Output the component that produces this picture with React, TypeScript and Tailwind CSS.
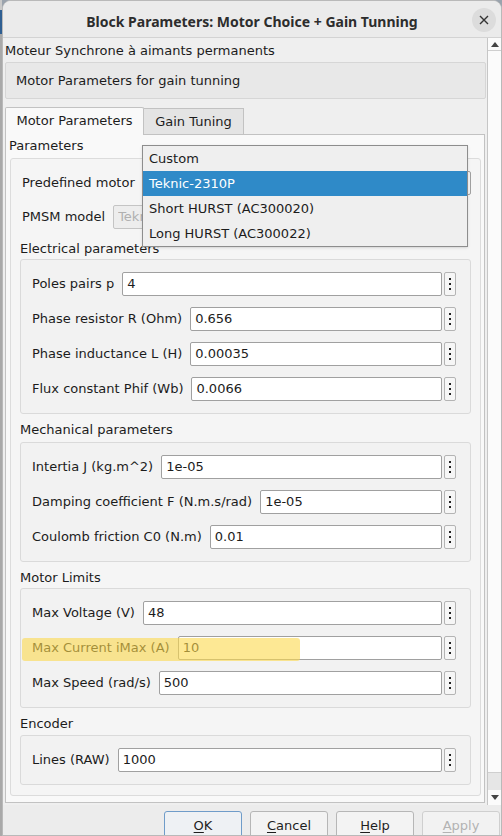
import React from "react";

const FONT = { fontFamily: '"DejaVu Sans", "Liberation Sans", sans-serif' };

function Dots() {
  return (
    <div className="ml-[2px] w-[12px] h-[24px] shrink-0 rounded-[2px] border border-[#b4b4b4] bg-[#f6f6f6] flex items-center justify-center">
      <svg width="4" height="14" viewBox="0 0 4 14">
        <rect x="1" y="1" width="2" height="2" fill="#222" />
        <rect x="1" y="6" width="2" height="2" fill="#222" />
        <rect x="1" y="11" width="2" height="2" fill="#222" />
      </svg>
    </div>
  );
}

function Row({ label, value, highlight }: { label: string; value: string; highlight?: boolean }) {
  return (
    <div className="relative flex items-center h-[24px]">
      <span className="whitespace-nowrap mr-[8px] leading-[16px]">{label}</span>
      <div className="flex-1 h-[24px] bg-white border border-[#a0a0a0] rounded-[2px] flex items-center pl-[4px] leading-[16px]">
        {value}
      </div>
      <Dots />
      {highlight && (
        <div className="absolute left-[-10px] top-[2px] w-[278px] h-[23px] rounded-[3px] bg-[#fcd84c]/60 pointer-events-none" />
      )}
    </div>
  );
}

function Section({ title, children, mt, mb }: { title: string; children: React.ReactNode; mt: string; mb: string }) {
  return (
    <div className={mt}>
      <div className={"leading-[16px] h-[16px] " + mb}>{title}</div>
      <div className="border border-[#dadada] bg-[#f2f2f2] rounded-[3px] pt-[12px] pb-[12px] pl-[11px] pr-[14px] flex flex-col gap-[11px]">
        {children}
      </div>
    </div>
  );
}

function Btn({ u, rest, focus, disabled }: { u: string; rest: string; focus?: boolean; disabled?: boolean }) {
  return (
    <div
      className={
        "w-[78px] h-[30px] rounded-[3px] flex items-center justify-center text-[13px] " +
        (focus
          ? "border border-[#6f9cc9] bg-[#eef1f4] text-[#1e1e1e]"
          : disabled
          ? "border border-[#cfcfcf] bg-[#f2f2f2] text-[#b3b3b3]"
          : "border border-[#b6b6b6] bg-[#f3f3f3] text-[#1e1e1e]")
      }
    >
      <span>
        <span className="underline underline-offset-[2px]">{u}</span>
        {rest}
      </span>
    </div>
  );
}

export default function App() {
  return (
    <div style={FONT} className="w-[502px] h-[836px] overflow-hidden bg-[#9aa3ad] flex text-[13px] text-[#1c1c1c]">
      <div className="w-[2px] shrink-0 flex flex-col">
        <div className="h-[10px] bg-[#c9c9c9]" />
        <div className="h-[24px] bg-[#2f5f92]" />
        <div className="flex-1 bg-[#a9a9a9]" />
      </div>
      <div className="flex-1 flex flex-col rounded-tl-[9px] rounded-tr-[9px] border border-[#b9b9b9] bg-[#efefef] overflow-hidden">
        {/* Title bar */}
        <div className="relative h-[37px] shrink-0 bg-[#ebebeb] border-b border-[#d3d3d3] flex items-center justify-center">
          <span
            style={{ fontFamily: '"Noto Sans", "DejaVu Sans", sans-serif' }}
            className="font-bold text-[14px] text-[#2d2d2d] mt-[4px]"
          >
            Block Parameters: Motor Choice + Gain Tunning
          </span>
          <div className="absolute right-[5px] top-[7px] w-[24px] h-[24px] rounded-full bg-[#dcdcdc] flex items-center justify-center">
            <svg width="10" height="10" viewBox="0 0 10 10">
              <path d="M1 1 L9 9 M9 1 L1 9" stroke="#333" strokeWidth="1.4" />
            </svg>
          </div>
        </div>

        {/* Scroll region */}
        <div className="flex h-[767px] shrink-0">
          <div className="flex-1 flex flex-col pl-[2px] pr-[1px]">
            <div className="pt-[5px] leading-[16px] h-[21px]">Moteur Synchrone à aimants permanents</div>
            <div className="mt-[3px] h-[37px] border border-[#d6d6d6] bg-[#e8e8e8] rounded-[2px] flex items-center pl-[10px] leading-[16px]">
              Motor Parameters for gain tunning
            </div>

            {/* Tabs */}
            <div className="mt-[7px] flex items-end h-[28px]">
              <div className="h-[28px] w-[139px] border border-b-0 border-[#c2c2c2] bg-[#f9f9f9] rounded-t-[2px] flex items-center justify-center relative z-10 mb-[-1px] pb-[1px]">
                Motor Parameters
              </div>
              <div className="h-[26px] w-[100px] border border-b-0 border-l-0 border-[#c2c2c2] bg-[#e4e4e4] flex items-center justify-center">
                Gain Tuning
              </div>
            </div>

            {/* Panel */}
            <div className="relative w-[480px] border border-[#c2c2c2] bg-[#f9f9f9] pl-[4px] pr-[3px] pt-[3px] pb-[6px]">
              <div className="leading-[16px] h-[16px] -ml-[1px]">Parameters</div>
              <div className="mt-[4px] border border-[#dcdcdc] bg-[#f5f5f5] rounded-[3px] px-[9px] pt-[12px] pb-[10px]">
                <div className="flex items-center h-[24px] pl-[2px]">
                  <span className="w-[120px] leading-[16px]">Predefined motor</span>
                  <div className="flex-1 h-[24px] border border-[#a0a0a0] bg-[#f4f4f4] rounded-[2px]" />
                </div>
                <div className="mt-[10px] flex items-center h-[24px] pl-[2px]">
                  <span className="mr-[8px] leading-[16px]">PMSM model</span>
                  <div className="flex-1 mr-[14px] h-[24px] border border-[#c4c4c4] bg-[#ededed] rounded-[2px] flex items-center pl-[4px] text-[#b0b0b0]">
                    <span className="w-[26px] overflow-hidden whitespace-nowrap">Tekn</span>
                  </div>
                </div>

                <Section title="Electrical parameters" mt="mt-[12px]" mb="mb-[2px]">
                  <Row label="Poles pairs p" value="4" />
                  <Row label="Phase resistor R (Ohm)" value="0.656" />
                  <Row label="Phase inductance L (H)" value="0.00035" />
                  <Row label="Flux constant Phif (Wb)" value="0.0066" />
                </Section>
                <Section title="Mechanical parameters" mt="mt-[8px]" mb="mb-[4px]">
                  <Row label="Intertia J (kg.m^2)" value="1e-05" />
                  <Row label="Damping coefficient F (N.m.s/rad)" value="1e-05" />
                  <Row label="Coulomb friction C0 (N.m)" value="0.01" />
                </Section>
                <Section title="Motor Limits" mt="mt-[8px]" mb="mb-[2px]">
                  <Row label="Max Voltage (V)" value="48" />
                  <Row label="Max Current iMax (A)" value="10" highlight />
                  <Row label="Max Speed (rad/s)" value="500" />
                </Section>
                <Section title="Encoder" mt="mt-[8px]" mb="mb-[3px]">
                  <Row label="Lines (RAW)" value="1000" />
                </Section>
              </div>

              {/* Dropdown popup */}
              <div className="absolute left-[136px] top-[10px] w-[326px] h-[102px] border border-[#8d8d8d] bg-[#efefef] flex flex-col shadow-sm">
                <div className="h-[25px] flex items-center pl-[6px]">Custom</div>
                <div className="h-[25px] flex items-center pl-[6px] bg-[#2f8ac8] text-white">Teknic-2310P</div>
                <div className="h-[25px] flex items-center pl-[6px]">Short HURST (AC300020)</div>
                <div className="h-[25px] flex items-center pl-[6px]">Long HURST (AC300022)</div>
              </div>
            </div>
          </div>

          {/* Scrollbar */}
          <div className="w-[14px] shrink-0 border-l border-[#c6c6c6] bg-[#fbfbfb] flex flex-col">
            <div className="h-[13px] border-b border-[#cfcfcf] flex items-center justify-center">
              <svg width="8" height="5" viewBox="0 0 8 5">
                <path d="M0 5 L4 0 L8 5 Z" fill="#444" />
              </svg>
            </div>
            <div className="flex-1 bg-[#fbfbfb]" />
            <div className="h-[18px] border-t border-[#cfcfcf] bg-[#e6e6e6]" />
            <div className="h-[15px] flex items-center justify-center">
              <svg width="8" height="5" viewBox="0 0 8 5">
                <path d="M0 0 L8 0 L4 5 Z" fill="#444" />
              </svg>
            </div>
          </div>
        </div>

        {/* Buttons */}
        <div className="flex-1 bg-[#ececec] flex justify-end items-start pt-[6px] pr-[1px] gap-[8px]">
          <Btn u="O" rest="K" focus />
          <Btn u="C" rest="ancel" />
          <Btn u="H" rest="elp" />
          <Btn u="A" rest="pply" disabled />
        </div>
      </div>
    </div>
  );
}
